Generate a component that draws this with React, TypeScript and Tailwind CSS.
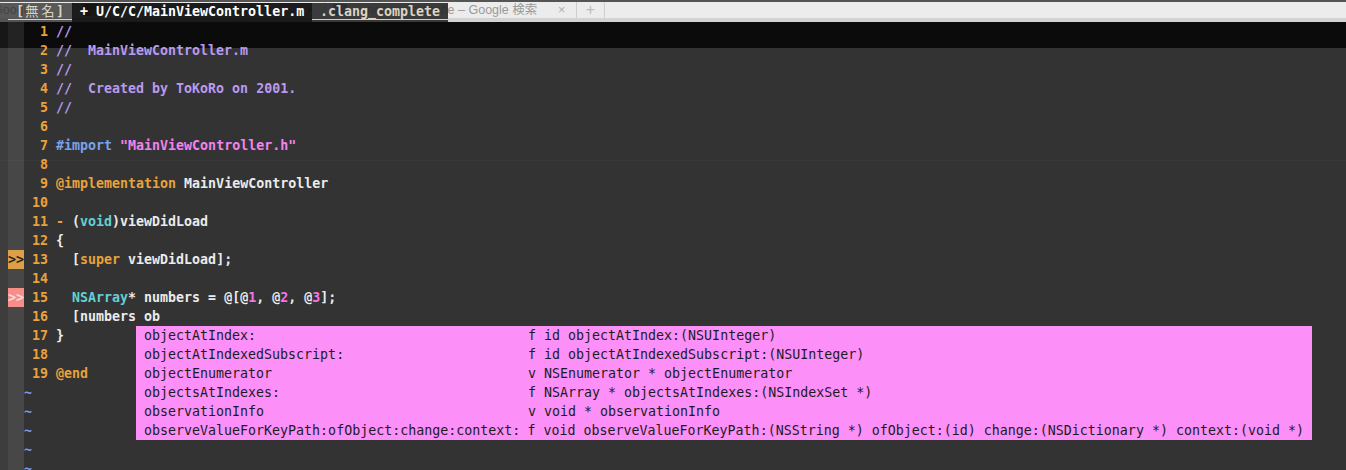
import React from "react";

// vim colour groups
const C = {
  com: "text-[#b99af0]",
  org: "text-[#e9a23b]",
  blu: "text-[#7aa2ea]",
  str: "text-[#f383ef]",
  wht: "text-[#ebebeb]",
  cyn: "text-[#63d0d6]",
  num: "text-[#f373ea]",
};

type Tok = [string, string];
type Line = { sign?: "warn" | "err"; toks: Tok[] };

const lines: Line[] = [
  { toks: [["//", C.com]] },
  { toks: [["//  MainViewController.m", C.com]] },
  { toks: [["//", C.com]] },
  { toks: [["//  Created by ToKoRo on 2001.", C.com]] },
  { toks: [["//", C.com]] },
  { toks: [] },
  { toks: [["#import", C.blu], [" ", C.wht], ['"MainViewController.h"', C.str]] },
  { toks: [] },
  { toks: [["@implementation", C.org], [" MainViewController", C.wht]] },
  { toks: [] },
  { toks: [["-", C.org], [" (", C.wht], ["void", C.cyn], [")viewDidLoad", C.wht]] },
  { toks: [["{", C.wht]] },
  { sign: "warn", toks: [["  [", C.wht], ["super", C.org], [" viewDidLoad];", C.wht]] },
  { toks: [] },
  {
    sign: "err",
    toks: [
      ["  ", C.wht],
      ["NSArray", C.cyn],
      ["* numbers = @[@", C.wht],
      ["1", C.num],
      [", @", C.wht],
      ["2", C.num],
      [", @", C.wht],
      ["3", C.num],
      ["];", C.wht],
    ],
  },
  { toks: [["  [numbers ob", C.wht]] },
  { toks: [["}", C.wht]] },
  { toks: [] },
  { toks: [["@end", C.org]] },
];

const completions: [string, string][] = [
  ["objectAtIndex:", "f id objectAtIndex:(NSUInteger)"],
  ["objectAtIndexedSubscript:", "f id objectAtIndexedSubscript:(NSUInteger)"],
  ["objectEnumerator", "v NSEnumerator * objectEnumerator"],
  ["objectsAtIndexes:", "f NSArray * objectsAtIndexes:(NSIndexSet *)"],
  ["observationInfo", "v void * observationInfo"],
  [
    "observeValueForKeyPath:ofObject:change:context:",
    "f void observeValueForKeyPath:(NSString *) ofObject:(id) change:(NSDictionary *) context:(void *)",
  ],
];

function Sign({ kind }: { kind?: "warn" | "err" }) {
  if (kind === "warn")
    return <div className="w-[16px] h-[19px] bg-[#dca048] text-[#2a2418]">&gt;&gt;</div>;
  if (kind === "err")
    return <div className="w-[16px] h-[19px] bg-[#f58f88] text-[#ffd9d6]">&gt;&gt;</div>;
  return <div className="w-[16px] h-[19px] bg-white/10" />;
}

function BrowserTabs() {
  return (
    <div className="h-[22px] flex flex-col bg-[#ececec] font-['Liberation_Sans',sans-serif] text-[12.5px] text-[#9a9a9a]">
      <div className="h-[2px] bg-[#555555]" />
      <div className="flex-1 flex items-start">
        <div className="w-[73px] h-[16px] flex items-center border-r border-[#cfcfcf] overflow-hidden">
          <span className="ml-[-7px] flex-1">Google</span>
          <span className="w-[10px] mr-[5px] text-[#b0b0b0]">×</span>
        </div>
        <div className="w-[252px] h-[16px] flex items-center border-r border-[#cfcfcf]">
          <div className="ml-[10px] w-[14px] h-[12px] grid grid-cols-2">
            <div className="bg-[#c8463c]" />
            <div className="bg-[#4a9a48]" />
            <div className="bg-[#3d6ec4]" />
            <div className="bg-[#e8b23a]" />
          </div>
          <span className="ml-[5px] flex-1 whitespace-nowrap overflow-hidden">Clang command line support fo</span>
          <span className="w-[10px] mr-[7px] text-[#b0b0b0]">×</span>
        </div>
        <div className="w-[252px] h-[16px] flex items-center border-r border-[#cfcfcf]">
          <div className="ml-[8px] w-[14px] h-[12px] bg-[#4a7fd8]" />
          <span className="ml-[20px] flex-1 whitespace-nowrap font-['Liberation_Sans','Noto_Sans_CJK_JP',sans-serif]">
            neocomplcache – Google 検索
          </span>
          <span className="w-[10px] mr-[8px] text-[#b0b0b0]">×</span>
        </div>
        <div className="w-[28px] h-[16px] flex items-center justify-center border-r border-[#cfcfcf] text-[16px] text-[#bdbdbd]">
          +
        </div>
      </div>
      <div className="h-[4px] bg-[#d3d3d3]" />
    </div>
  );
}

function TabLine() {
  return (
    <div className="absolute left-0 top-[3px] h-[19px] flex font-bold">
      <div className="w-[8px] bg-[rgba(40,40,40,0.75)]" />
      <div className="w-[64px] bg-[rgba(40,40,40,0.75)] text-[#dcd3c2]">
        <div className="h-[17px] leading-[17px] border-b border-[#dcd3c2] pl-[8px] flex font-['DejaVu_Sans_Mono','Noto_Sans_CJK_JP',monospace]">
          <span>[</span>
          <span className="w-[16px] text-center font-normal">無</span>
          <span className="w-[16px] text-center font-normal">名</span>
          <span>]</span>
        </div>
      </div>
      <div className="w-[240px] bg-[rgba(12,12,12,0.93)] text-white pl-[8px] leading-[17px] whitespace-pre">
        + U/C/C/MainViewController.m
      </div>
      <div className="w-[136px] bg-[rgba(40,40,40,0.9)] text-[#dcd3c2]">
        <div className="h-[17px] leading-[17px] border-b border-[#dcd3c2] pl-[8px]">.clang_complete</div>
      </div>
    </div>
  );
}

export default function App() {
  return (
    <div className="w-[1346px] h-[470px] overflow-hidden bg-[#333333] font-['DejaVu_Sans_Mono',monospace] text-[13.3px]">
      {/* browser chrome seen through the terminal + vim tabline */}
      <div className="relative h-[22px]">
        <BrowserTabs />
        <TabLine />
      </div>

      {/* editor */}
      <div className="relative h-[448px] bg-[linear-gradient(to_bottom,#0b0b0b_0px,#0b0b0b_26px,#333333_26px,#333333_138px,#393939_138px,#393939_139px,#333333_139px)] font-bold leading-[19px]">
        {lines.map((ln, i) => (
          <div key={i} className="flex h-[19px]">
            <div className="w-[8px] bg-white/5" />
            <Sign kind={ln.sign} />
            <div className="w-[32px] pr-[8px] text-right text-[#e9a23b]">{i + 1}</div>
            <div className="whitespace-pre">
              {ln.toks.map(([t, cls], j) => (
                <span key={j} className={cls}>
                  {t}
                </span>
              ))}
            </div>
          </div>
        ))}
        {[0, 1, 2, 3, 4].map((k) => (
          <div key={k} className="flex h-[19px]">
            <div className="w-[8px] bg-white/5" />
            <div className="w-[16px] bg-white/10" />
            <div className="text-[#7a9de6]">~</div>
          </div>
        ))}

        {/* completion popup */}
        <div className="absolute left-[136px] top-[304px] w-[1176px] bg-[#fd8ff8] px-[8px] font-normal text-[#1c1c1c]">
          {completions.map(([word, info]) => (
            <div key={word} className="flex h-[19px] whitespace-pre">
              <div className="w-[384px]">{word}</div>
              <div>{info}</div>
            </div>
          ))}
        </div>
      </div>
    </div>
  );
}
